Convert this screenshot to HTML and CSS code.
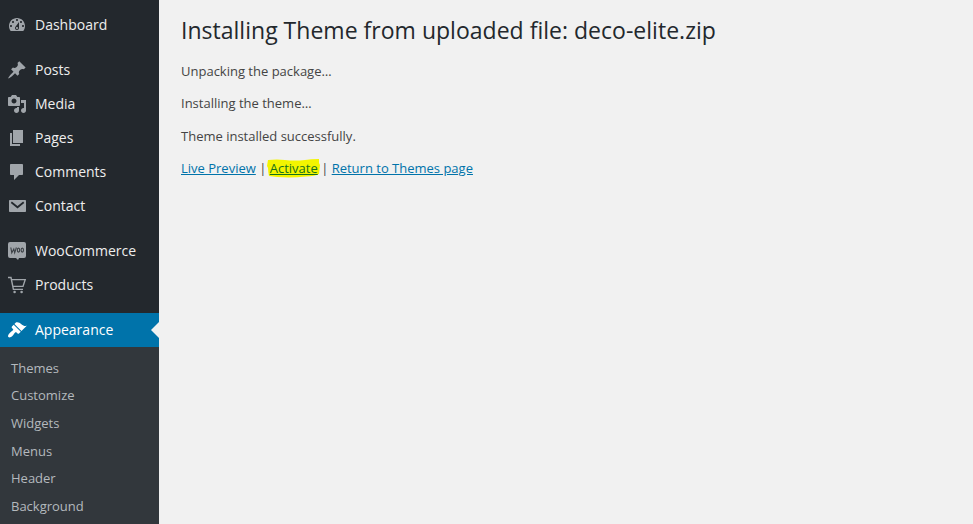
FILE: index.html
```
<!DOCTYPE html>
<html lang="en">
<head>
<meta charset="utf-8">
<title>Installing Theme</title>
<link rel="stylesheet" href="styles.css">
</head>
<body>
<div class="admin">
  <nav class="sidebar">
    <ul class="menu">
      <li class="item"><svg class="icon" viewBox="0 0 20 20"><path fill-rule="evenodd" d="M3.76 16h12.48c1.1-1.37 1.76-3.11 1.76-5 0-4.42-3.58-8-8-8s-8 3.58-8 8c0 1.89.66 3.63 1.76 5zM10 4c.55 0 1 .45 1 1s-.45 1-1 1-1-.45-1-1 .45-1 1-1zM6 6c.55 0 1 .45 1 1s-.45 1-1 1-1-.45-1-1 .45-1 1-1zm8 0c.55 0 1 .45 1 1s-.45 1-1 1-1-.45-1-1 .45-1 1-1zm-5.37 5.55L12 7v6c0 1.1-.9 2-2 2s-2-.9-2-2c0-.57.24-1.08.63-1.45zM4 10c.55 0 1 .45 1 1s-.45 1-1 1-1-.45-1-1 .45-1 1-1zm12 0c.55 0 1 .45 1 1s-.45 1-1 1-1-.45-1-1 .45-1 1-1zm-5 3c0-.55-.45-1-1-1s-1 .45-1 1 .45 1 1 1 1-.45 1-1z"/></svg>Dashboard</li>
      <li class="item group"><svg class="icon" viewBox="0 0 20 20"><path d="M10.44 3.02l1.82-1.82 6.36 6.35-1.83 1.82c-1.05-.68-2.48-.57-3.41.36l-.75.75c-.92.93-1.04 2.35-.35 3.41l-1.83 1.82-2.41-2.41-2.8 2.79c-.42.42-3.38 2.71-3.8 2.29s1.86-3.39 2.28-3.81l2.79-2.79L4.1 9.36l1.83-1.82c1.05.69 2.48.57 3.4-.36l.75-.75c.93-.92 1.05-2.35.36-3.41z"/></svg>Posts</li>
      <li class="item"><svg class="icon" viewBox="0 0 20 20"><path fill-rule="evenodd" d="M13 11V4c0-.55-.45-1-1-1h-1.67L9 1H5L3.67 3H2c-.55 0-1 .45-1 1v7c0 .55.45 1 1 1h10c.55 0 1-.45 1-1zM7 4.5c1.38 0 2.5 1.12 2.5 2.5S8.38 9.5 7 9.5 4.5 8.38 4.5 7 5.62 4.5 7 4.5zM14 6h5v10.5c0 1.38-1.12 2.5-2.5 2.5S14 17.88 14 16.5s1.12-2.5 2.5-2.5c.17 0 .34.02.5.05V9h-3V6zm-4 8.05V13h2v3.5c0 1.38-1.12 2.5-2.5 2.5S7 17.88 7 16.5 8.12 14 9.5 14c.17 0 .34.02.5.05z"/></svg>Media</li>
      <li class="item"><svg class="icon" viewBox="0 0 20 20"><path d="M6 15V2h10v13H6zm-1 1h8v2H3V5h2v11z"/></svg>Pages</li>
      <li class="item"><svg class="icon" viewBox="0 0 20 20"><path d="M4 2h11c.55 0 1 .45 1 1v9c0 .55-.45 1-1 1h-3l-5 5v-5H4c-.55 0-1-.45-1-1V3c0-.55.45-1 1-1z"/></svg>Comments</li>
      <li class="item"><svg class="icon" viewBox="0 0 20 20"><path d="M3 4h15c.55 0 1 .45 1 1v10c0 .55-.45 1-1 1H3c-.55 0-1-.45-1-1V5c0-.55.45-1 1-1z"/><path class="cut" d="M4.3 6.3l6.2 5 6.2-5"/></svg>Contact</li>
      <li class="item group"><svg class="icon" viewBox="0 0 20 20"><path d="M3 1h14a2 2 0 0 1 2 2v12a2 2 0 0 1-2 2h-5l-1 2-2-2H3a2 2 0 0 1-2-2V3a2 2 0 0 1 2-2z"/><path class="woo" d="M3.8 6.5l1 5.3 2-3.8.9 3.8 1.7-5.3"/><ellipse class="woo" cx="11.5" cy="9.1" rx="1.2" ry="2"/><ellipse class="woo" cx="15.3" cy="9.1" rx="1.2" ry="2"/></svg>WooCommerce</li>
      <li class="item"><svg class="icon" viewBox="0 0 20 20"><path class="line" d="M1 2.5h3l2.4 11.9H16M4.6 4.6h13.6l-2.2 6.8H6"/><circle cx="7.6" cy="17" r="1.3"/><circle cx="14.6" cy="17" r="1.3"/></svg>Products</li>
      <li class="item group current"><svg class="icon" viewBox="0 0 20 20"><path d="M14.48 11.06L7.41 3.99l1.5-1.5c.5-.56 2.3-.47 3.51.32 1.21.8 1.43 1.28 2.91 2.1 1.18.64 2.45 1.26 4.45.85zm-.71.71L6.7 4.7 4.93 6.47c-.39.39-.39 1.02 0 1.41l1.06 1.06c.39.39.39 1.03 0 1.42-.6.6-1.43 1.11-2.21 1.69-.35.26-.7.53-1.01.84C1.43 14.23.4 16.08 1.4 17.07c.99 1 2.84-.03 4.18-1.36.31-.31.58-.66.85-1.02.57-.78 1.08-1.61 1.69-2.21.39-.39 1.02-.39 1.41 0l1.06 1.06c.39.39 1.02.39 1.41 0z"/></svg>Appearance</li>
    </ul>
    <ul class="submenu">
      <li>Themes</li>
      <li>Customize</li>
      <li>Widgets</li>
      <li>Menus</li>
      <li>Header</li>
      <li>Background</li>
    </ul>
  </nav>
  <main class="content">
    <h1>Installing Theme from uploaded file: deco-elite.zip</h1>
    <p>Unpacking the package…</p>
    <p>Installing the theme…</p>
    <p>Theme installed successfully.</p>
    <p><a href="#">Live Preview</a> | <a class="marked" href="#"><svg class="marker" viewBox="0 0 54 19"><path d="M1 1Q10 0 18 1Q28 2 38 1Q44 0 52 0L52 4L53 6L52 15Q48 17 39 17.5Q25 19 10 18L2 17Q1 12 1 9L0 7z"/></svg>Activate</a> | <a href="#">Return to Themes page</a></p>
  </main>
</div>
</body>
</html>
```
FILE: styles.css
```
* { box-sizing: border-box; }
body {
  margin: 0;
  background: #f1f1f1;
  color: #444;
  font: 13px/19.5px "Open Sans", sans-serif;
}
.admin { display: flex; height: 524px; overflow: hidden; }
.sidebar {
  display: flex;
  flex-direction: column;
  flex: 0 0 159px;
  background: #23282d;
}
ul { margin: 0; padding: 0; list-style: none; }
.menu { padding-top: 8px; }
.item {
  display: flex;
  align-items: center;
  gap: 8px;
  height: 34px;
  padding-left: 7px;
  color: #eee;
  font-size: 14px;
}
.group { margin-top: 11px; }
.icon { width: 20px; height: 20px; fill: #a0a5aa; }
.cut { fill: none; stroke: #23282d; stroke-width: 1.8; }
.woo { fill: none; stroke: #3c4146; stroke-width: 1.1; }
.line { fill: none; stroke: #a0a5aa; stroke-width: 1.4; }
.current { position: relative; background: #0073aa; color: #fff; }
.current .icon { fill: #fff; }
.current::after {
  content: "";
  position: absolute;
  top: 9px;
  right: 0;
  border: 8px solid transparent;
  border-left: 0;
  border-right-color: #f1f1f1;
}
.submenu { flex: 1; padding: 7.8px 11px 0; background: #32373c; color: #b4b9be; }
.submenu li { height: 27.6px; line-height: 27.6px; }
.content { flex: 1; padding: 16px 22px; }
h1 { margin: 0; color: #23282d; font-size: 23px; font-weight: 400; line-height: 29px; letter-spacing: 0.015px; }
p { margin: 13px 0; }
h1 + p { margin-top: 16.75px; }
a { color: #0073aa; text-decoration: underline; }
.marked { position: relative; z-index: 0; color: #15701c; }
.marker { position: absolute; z-index: -1; left: -3px; top: 0; width: 54px; height: 19px; fill: #f3f500; }
```
